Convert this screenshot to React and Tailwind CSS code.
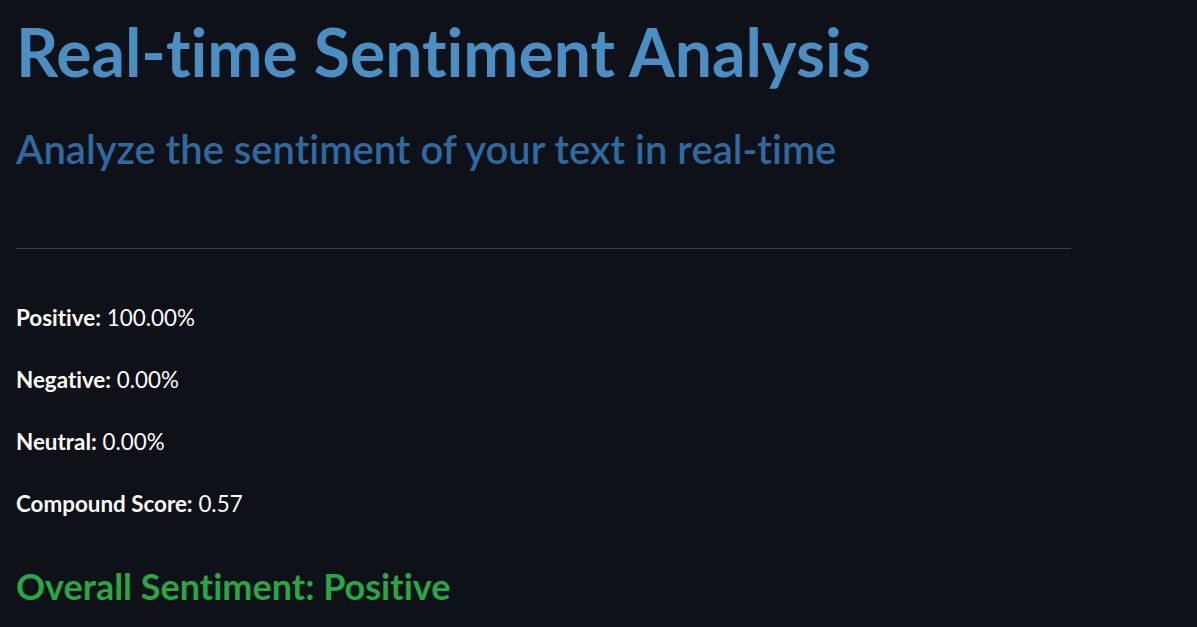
export default function App() {
  const rows = [
    { label: 'Positive:', value: '100.00%' },
    { label: 'Negative:', value: '0.00%' },
    { label: 'Neutral:', value: '0.00%' },
    { label: 'Compound Score:', value: '0.57' },
  ];

  return (
    <div
      className="min-h-screen bg-[#0e1117] text-[#fafafa] [font-variant-ligatures:none]"
      style={{ fontFamily: 'Lato, "Noto Sans", sans-serif' }}
    >
      <div className="w-[1071px] pl-4 pt-[12px]">
        <h1 className="text-[66px] font-bold leading-[1.2] text-[#4a8ec4]">
          Real-time Sentiment Analysis
        </h1>
        <h3 className="mt-[34px] text-[40px] font-semibold leading-[1.2] text-[#2e6aa0]">
          Analyze the sentiment of your text in real-time
        </h3>
        <hr className="mt-[75px] border-0 border-t border-[#3d3f45]" />

        <div className="mt-[50px] flex flex-col gap-[24px]">
          {rows.map((r) => (
            <p key={r.label} className="text-[22.4px] leading-[38px]">
              <strong className="font-bold">{r.label}</strong> {r.value}
            </p>
          ))}
        </div>

        <h4 className="mt-[42px] text-[36px] font-bold leading-[1.2] text-[#28a745]">
          Overall Sentiment: Positive
        </h4>
      </div>
    </div>
  );
}
